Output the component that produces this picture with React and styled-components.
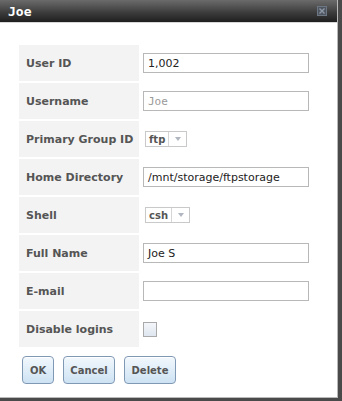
import React from 'react'
import styled, { createGlobalStyle } from 'styled-components'

const Global = createGlobalStyle`
  html, body { margin: 0; padding: 0; background: #4a4a4a; }
  body { width: 342px; height: 401px; overflow: hidden; font-family: "DejaVu Sans", Verdana, sans-serif; }
`

const Frame = styled.div`
  width: 338px;
  height: 398px;
  background: #fff;
  border-right: 1px solid #b9b9b9;
  border-bottom: 1px solid #b9b9b9;
  display: flex;
  flex-direction: column;
  box-sizing: border-box;
`

const TitleBar = styled.div`
  height: 22px;
  flex: none;
  display: flex;
  align-items: center;
  justify-content: space-between;
  padding: 0 10px 0 8px;
  background: linear-gradient(#6b6b6b, #3a3a3a 60%, #1f1f1f);
  border-bottom: 1px solid #d8d8d8;
`

const Title = styled.span`
  color: #fff;
  font-weight: bold;
  font-size: 13px;
  font-family: "DejaVu Sans Mono", monospace;
`

const Close = styled.span`
  width: 10px;
  height: 10px;
  display: flex;
`

const Body = styled.div`
  padding: 22px 0 0 19px;
`

const Form = styled.div`
  display: grid;
  grid-template-columns: 120px 1fr;
  grid-auto-rows: 36px;
  row-gap: 2px;
  width: 292px;
`

const Label = styled.div`
  background: #f3f3f3;
  display: flex;
  align-items: center;
  padding: 1px 0 0 7px;
  font-size: 11px;
  font-weight: bold;
  color: #555;
`

const Cell = styled.div`
  display: flex;
  align-items: center;
  padding-left: ${p => p.$pad || 4}px;
`

const Input = styled.div`
  width: 166px;
  height: 20px;
  box-sizing: border-box;
  border: 1px solid #b8b8b8;
  display: flex;
  align-items: center;
  padding-left: 4px;
  font-size: 11px;
  color: ${p => (p.$placeholder ? '#999' : '#222')};
  font-family: ${p => (p.$placeholder ? '"DejaVu Sans Mono", monospace' : '"DejaVu Sans", Verdana, sans-serif')};
`

const Select = styled.div`
  height: 16px;
  box-sizing: border-box;
  border: 1px solid #c9c9c9;
  display: flex;
  align-items: stretch;
  font-size: 10px;
  font-weight: bold;
  color: #555;
`

const SelectValue = styled.span`
  display: flex;
  align-items: center;
  padding: 0 3px;
  border-right: 1px solid #d6d6d6;
`

const Arrow = styled.span`
  width: 17px;
  display: flex;
  align-items: center;
  justify-content: center;
  &::after {
    content: '';
    border-left: 3px solid transparent;
    border-right: 3px solid transparent;
    border-top: 4px solid #b0b6c0;
  }
`

const Check = styled.div`
  width: 14px;
  height: 15px;
  box-sizing: border-box;
  border: 1px solid #a9a9a9;
  background: linear-gradient(#f4f6fa, #dfe6ef);
`

const Buttons = styled.div`
  display: flex;
  gap: 9px;
  margin: 9px 0 0 3px;
`

const Button = styled.button`
  height: 28px;
  width: ${p => p.$w || 52}px;
  padding: 0;
  border: 1px solid #7f99b5;
  border-radius: 4px;
  background: linear-gradient(#f2f8fd, #cde2f3);
  box-shadow: inset 0 1px 0 #fff;
  font-family: "DejaVu Sans", Verdana, sans-serif;
  font-size: 10px;
  font-weight: bold;
  color: #555;
`

const rows = [
  { label: 'User ID', kind: 'input', value: '1,002' },
  { label: 'Username', kind: 'input', value: 'Joe', placeholder: true },
  { label: 'Primary Group ID', kind: 'select', value: 'ftp' },
  { label: 'Home Directory', kind: 'input', value: '/mnt/storage/ftpstorage' },
  { label: 'Shell', kind: 'select', value: 'csh' },
  { label: 'Full Name', kind: 'input', value: 'Joe S' },
  { label: 'E-mail', kind: 'input', value: '' },
  { label: 'Disable logins', kind: 'check' },
]

const Field = ({ row }) => {
  if (row.kind === 'select') {
    return (
      <Cell $pad={6}>
        <Select>
          <SelectValue>{row.value}</SelectValue>
          <Arrow />
        </Select>
      </Cell>
    )
  }
  if (row.kind === 'check') {
    return (
      <Cell>
        <Check />
      </Cell>
    )
  }
  return (
    <Cell>
      <Input $placeholder={row.placeholder}>{row.value}</Input>
    </Cell>
  )
}

export default function App() {
  return (
    <>
      <Global />
      <Frame>
        <TitleBar>
          <Title>Joe</Title>
          <Close>
            <svg width="10" height="10" viewBox="0 0 10 10">
              <rect x="0.5" y="0.5" width="9" height="9" fill="#4f5660" stroke="#6d7784" />
              <path d="M2.5 2.5 L7.5 7.5 M7.5 2.5 L2.5 7.5" stroke="#8e99a8" strokeWidth="1.4" />
            </svg>
          </Close>
        </TitleBar>
        <Body>
          <Form>
            {rows.map(r => (
              <React.Fragment key={r.label}>
                <Label>{r.label}</Label>
                <Field row={r} />
              </React.Fragment>
            ))}
          </Form>
          <Buttons>
            <Button $w={32}>OK</Button>
            <Button>Cancel</Button>
            <Button>Delete</Button>
          </Buttons>
        </Body>
      </Frame>
    </>
  )
}
